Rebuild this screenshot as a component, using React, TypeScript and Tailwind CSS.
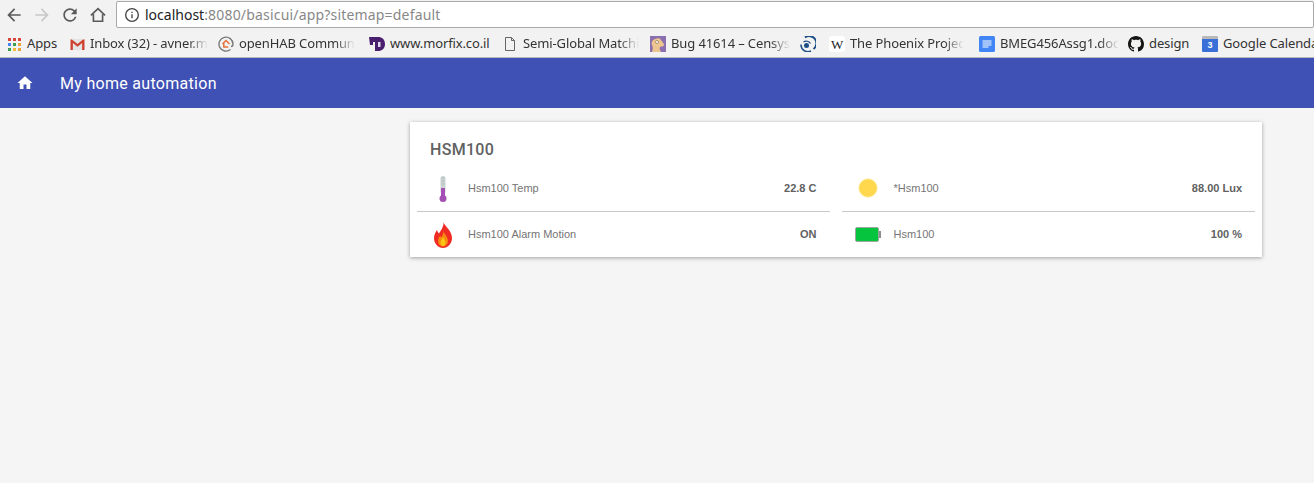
import React from 'react';

const Home = ({ className }: { className?: string }) => (
  <svg viewBox="0 0 24 24" className={className} fill="currentColor">
    <path d="M10 20v-6h4v6h5v-8h3L12 3 2 12h3v8z" />
  </svg>
);

const AppsIcon = () => {
  const colors = ['#d9453a', '#d9453a', '#d9453a', '#4285f4', '#3f9e4d', '#e8a33a', '#3f9e4d', '#f0b93a', '#e8a33a'];
  return (
    <div className="grid grid-cols-3 gap-[2px] w-[13px] h-[13px]">
      {colors.map((c, i) => (
        <svg key={i} viewBox="0 0 3 3" className="w-[3px] h-[3px]">
          <rect width="3" height="3" fill={c} />
        </svg>
      ))}
    </div>
  );
};

const Gmail = () => (
  <svg viewBox="0 0 16 14" className="w-[15px] h-[13px]">
    <rect x="0.5" y="1" width="15" height="12" fill="#e4e4e4" />
    <path d="M.5 13V1.500h1.500L8 6.500l6-5h1.500V13h-2.500V5.500L8 9.500 3 5.500V13z" fill="#d0402f" />
  </svg>
);

const OpenHab = () => (
  <svg viewBox="0 0 16 16" className="w-[16px] h-[16px]">
    <path d="M12.500 13.500A7 7 0 1 1 15 8c0 1.500-1 2.500-2 2.500" fill="none" stroke="#7a7a7a" strokeWidth="1.400" />
    <path d="M4.500 8 8 4.500 11.500 8M5.800 7.500V11h4.400" fill="none" stroke="#e8703a" strokeWidth="1.500" />
  </svg>
);

const Morfix = () => (
  <svg viewBox="0 0 16 16" className="w-[16px] h-[16px]">
    <path d="M0 1h9c4 0 7 2.500 7 7s-3 7-7 7H6V6H4v3H1z" fill="#4a1f6e" />
    <rect x="9" y="6" width="2.500" height="5" fill="#e4d8ee" />
  </svg>
);

const FileIcon = () => (
  <svg viewBox="0 0 16 16" className="w-[16px] h-[16px]" fill="none" stroke="#666" strokeWidth="1">
    <path d="M3.500 1.500h6l3 3v10h-9zM9.500 1.500v3h3" />
  </svg>
);

const Bugzilla = () => (
  <svg viewBox="0 0 16 16" className="w-[16px] h-[16px]">
    <rect width="16" height="16" fill="#8c6fb0" />
    <path d="M2 16c1-3 1-5 0-7s0-5 3-6 5-1 6 1 3 3 3 5-3 1-4 2 0 3 1 5z" fill="#edc58e" />
    <circle cx="7" cy="6" r="1.500" fill="#fff" stroke="#6a4a2a" strokeWidth="0.500" />
  </svg>
);

const Censys = () => (
  <svg viewBox="0 0 16 16" className="w-[16px] h-[16px]">
    <path d="M5 1.500A7 7 0 0 1 13.500 13" fill="none" stroke="#1c4f86" strokeWidth="2" />
    <path d="M1 8.500A7 7 0 0 0 11 15" fill="none" stroke="#1c4f86" strokeWidth="1.500" />
    <circle cx="6.500" cy="9.500" r="2.500" fill="#1c4f86" />
    <path d="M3.500 6A5 5 0 0 1 10.500 7.500" fill="none" stroke="#1c4f86" strokeWidth="1.200" />
  </svg>
);

const Wiki = () => (
  <div className="w-[16px] h-[16px] bg-white rounded-[3px] flex items-center justify-center text-[13px] leading-none text-[#222] font-['Liberation_Serif',serif]">
    W
  </div>
);

const Docs = () => (
  <svg viewBox="0 0 16 16" className="w-[16px] h-[16px]">
    <rect width="16" height="16" rx="1.500" fill="#4285f4" />
    <path d="M3.500 5h9M3.500 7h9M3.500 9h9M3.500 11h6" stroke="#fff" strokeWidth="1" />
  </svg>
);

const Github = () => (
  <svg viewBox="0 0 16 16" className="w-[16px] h-[16px]" fill="#161514">
    <path d="M8 0C3.580 0 0 3.580 0 8c0 3.540 2.290 6.530 5.470 7.590.4.070.55-.17.55-.38 0-.19-.01-.82-.01-1.490-2.010.37-2.530-.49-2.690-.94-.09-.23-.48-.94-.82-1.130-.28-.15-.68-.52-.01-.53.63-.01 1.080.58 1.230.82.72 1.210 1.870.87 2.330.66.070-.52.28-.87.51-1.070-1.780-.2-3.640-.89-3.640-3.950 0-.87.31-1.590.82-2.150-.08-.2-.36-1.020.08-2.120 0 0 .67-.21 2.200.82.64-.18 1.320-.27 2-.27s1.360.09 2 .27c1.530-1.040 2.200-.82 2.200-.82.44 1.100.16 1.920.08 2.120.51.56.82 1.270.82 2.150 0 3.070-1.870 3.750-3.650 3.950.29.25.54.73.54 1.480 0 1.070-.01 1.930-.01 2.200 0 .21.15.46.55.38A8.010 8.010 0 0 0 16 8c0-4.420-3.580-8-8-8z" />
  </svg>
);

const Calendar = () => (
  <div className="w-[16px] h-[16px] flex flex-col rounded-[1px] overflow-hidden">
    <div className="h-[3px] bg-[#b8b8b8]" />
    <div className="flex-1 bg-[#3a6fd8] text-white text-[9px] leading-[13px] font-bold text-center font-['Liberation_Sans',sans-serif]">
      3
    </div>
  </div>
);

const Thermometer = () => (
  <svg viewBox="0 0 14 28" className="w-[14px] h-[28px]">
    <rect x="4.500" y="1" width="5" height="18" rx="2.500" fill="#c9d3d2" />
    <path d="M5.500 3h3M5.500 6h3M5.500 9h3" stroke="#aab6b5" strokeWidth="0.700" />
    <rect x="5" y="13" width="4" height="9" fill="#a34fb4" />
    <circle cx="7" cy="23.500" r="3.500" fill="#a34fb4" />
  </svg>
);

const Flame = () => (
  <svg viewBox="0 0 20 26" className="w-[20px] h-[26px]">
    <path d="M10.500 0c.5 4 8.500 8 8.500 16 0 5.500-4 10-9 10s-9-4.500-9-10c0-3.500 1.500-5.500 3-8 .5 1.500 1 2.500 2 3.500C8 8.500 11 4 10.500 0z" fill="#f02b23" />
    <path d="M10.500 9c.5 3 4.500 5.500 4.500 10 0 3-2.500 5.500-5 5.500S5 22 5 19c0-2.500 1-3.500 2-5 .5.500 1 1 1 1.500C9.500 14 10.500 12 10.500 9z" fill="#f88a10" />
    <path d="M10 15c.5 2 2.500 3 2.500 5.500 0 2-1 3.500-2.500 3.500s-2.500-1.500-2.500-3.500c0-2 2-3.500 2.500-5.500z" fill="#fbc514" />
  </svg>
);

const Sun = () => (
  <svg viewBox="0 0 24 24" className="w-[24px] h-[24px]">
    <circle cx="12" cy="11" r="10" fill="#fff6d6" />
    <circle cx="12" cy="11" r="9" fill="#ffd84d" />
  </svg>
);

const Battery = () => (
  <svg viewBox="0 0 27 15" className="w-[27px] h-[15px]">
    <rect x="23" y="4" width="3" height="7" fill="#8a8f8a" />
    <rect x="0.500" y="0.500" width="23" height="14" rx="1.500" fill="#06c43d" stroke="#9aa89e" strokeWidth="1" />
  </svg>
);

const NavButton = ({ children }: { children: React.ReactNode }) => (
  <div className="w-[28px] h-[28px] flex items-center justify-center">{children}</div>
);

const bookmarks = [
  { icon: <AppsIcon />, title: 'Apps', width: 'w-[63px]', fade: false },
  { icon: <Gmail />, title: 'Inbox (32) - avner.m', width: 'w-[149px]', fade: true },
  { icon: <OpenHab />, title: 'openHAB Commun', width: 'w-[151px]', fade: true },
  { icon: <Morfix />, title: 'www.morfix.co.il', width: 'w-[133px]', fade: false },
  { icon: <FileIcon />, title: 'Semi-Global Matchi', width: 'w-[148px]', fade: true },
  { icon: <Bugzilla />, title: 'Bug 41614 – Censys', width: 'w-[150px]', fade: true },
  { icon: <Censys />, title: '', width: 'w-[29px]', fade: false },
  { icon: <Wiki />, title: 'The Phoenix Projec', width: 'w-[150px]', fade: true },
  { icon: <Docs />, title: 'BMEG456Assg1.doc', width: 'w-[149px]', fade: true },
  { icon: <Github />, title: 'design', width: 'w-[74px]', fade: false },
  { icon: <Calendar />, title: 'Google Calenda', width: 'w-[112px]', fade: false },
];

const items = [
  [
    { icon: <Thermometer />, label: 'Hsm100 Temp', value: '22.8 C' },
    { icon: <Sun />, label: '*Hsm100', value: '88.00 Lux' },
  ],
  [
    { icon: <Flame />, label: 'Hsm100 Alarm Motion', value: 'ON' },
    { icon: <Battery />, label: 'Hsm100', value: '100 %' },
  ],
];

const Widget = ({ item, row, right }: { item: (typeof items)[0][0]; row: number; right: boolean }) => (
  <div
    className={`flex-1 flex items-center pr-[13px] ${right ? 'pl-[13px]' : 'pl-[12px]'} ${
      row === 0 ? 'h-[46px] border-b border-[#c8c8c8]' : 'h-[45px]'
    }`}
  >
    <div className="w-[27px] flex justify-center">{item.icon}</div>
    <span className="ml-[12px] flex-1 text-[11px] text-[#757575] font-['Liberation_Sans',sans-serif]">{item.label}</span>
    <span className="text-[11px] font-bold text-[#616161] font-['Liberation_Sans',sans-serif]">{item.value}</span>
  </div>
);

export default function App() {
  return (
    <div className="w-[1314px] h-[483px] overflow-hidden bg-[#f5f5f5] flex flex-col">
      <div className="h-[58px] shrink-0 bg-[#f2f2f2] border-b border-[#b8b8b8] flex flex-col font-['Noto_Sans',sans-serif] text-[#222]">
        <div className="h-[29px] flex items-center">
          <NavButton>
            <svg viewBox="0 0 24 24" className="w-[20px] h-[20px]" fill="#5a5a5a">
              <path d="M20 11H7.830l5.590-5.590L12 4l-8 8 8 8 1.410-1.410L7.830 13H20z" />
            </svg>
          </NavButton>
          <NavButton>
            <svg viewBox="0 0 24 24" className="w-[20px] h-[20px]" fill="#c8c8c8">
              <path d="M12 4l-1.410 1.410L16.170 11H4v2h12.170l-5.580 5.590L12 20l8-8z" />
            </svg>
          </NavButton>
          <NavButton>
            <svg viewBox="0 0 24 24" className="w-[20px] h-[20px]" fill="#5a5a5a">
              <path d="M17.650 6.350A7.958 7.958 0 0 0 12 4c-4.420 0-7.990 3.580-7.990 8s3.570 8 7.990 8c3.730 0 6.840-2.550 7.730-6h-2.080A5.990 5.990 0 0 1 12 18c-3.310 0-6-2.690-6-6s2.690-6 6-6c1.660 0 3.140.69 4.220 1.780L13 11h7V4l-2.350 2.350z" />
            </svg>
          </NavButton>
          <NavButton>
            <svg viewBox="0 0 24 24" className="w-[20px] h-[20px]" fill="none" stroke="#5a5a5a" strokeWidth="2">
              <path d="M3.500 12.500 12 4.500l8.500 8M6.500 11v8.500h11V11" />
            </svg>
          </NavButton>
          <div className="ml-[4px] flex-1 h-[27px] bg-white border border-[#a9a9a9] rounded-[2px] flex items-center pl-[7px] text-[14px]">
            <svg viewBox="0 0 24 24" className="w-[16px] h-[16px]" fill="none" stroke="#444" strokeWidth="2">
              <circle cx="12" cy="12" r="9.500" />
              <path d="M12 11v6M12 7v2" />
            </svg>
            <span className="ml-[5px] text-[#222]">localhost</span>
            <span className="text-[#888] tracking-[0.18px]">:8080/basicui/app?sitemap=default</span>
          </div>
        </div>
        <div className="flex-1 flex items-center pl-[6px] pt-[2px] text-[13px] tracking-[-0.12px] overflow-hidden whitespace-nowrap">
          {bookmarks.map((b, i) => (
            <div key={i} className={`${b.width} shrink-0 flex items-center gap-[5px]`}>
              <div className="shrink-0 w-[16px] flex justify-center">{b.icon}</div>
              {b.title && (
                <span
                  className={`text-[#333] ${
                    b.fade ? '[mask-image:linear-gradient(to_right,black_calc(100%-20px),transparent_100%)]' : ''
                  }`}
                >
                  {b.title}
                </span>
              )}
            </div>
          ))}
        </div>
      </div>

      <div className="h-[50px] shrink-0 bg-[#3f51b5] flex items-center text-white font-['Roboto',sans-serif]">
        <Home className="ml-[16px] w-[18px] h-[18px]" />
        <span className="ml-[26px] pt-[2px] text-[16px] tracking-[0.3px]">My home automation</span>
      </div>

      <div className="pl-[410px] pt-[14px]">
        <div className="w-[852px] h-[135px] bg-white shadow-[0_1px_4px_rgba(0,0,0,0.35)] flex flex-col px-[7px]">
          <div className="h-[44px] pl-[13px] pt-[18px] text-[16px] leading-[19px] font-medium text-[#616161] tracking-[0.3px] font-['Roboto',sans-serif]">
            HSM100
          </div>
          {items.map((row, r) => (
            <div key={r} className="flex gap-[12px]">
              {row.map((item, c) => (
                <Widget key={item.label} item={item} row={r} right={c === 1} />
              ))}
            </div>
          ))}
        </div>
      </div>
    </div>
  );
}
